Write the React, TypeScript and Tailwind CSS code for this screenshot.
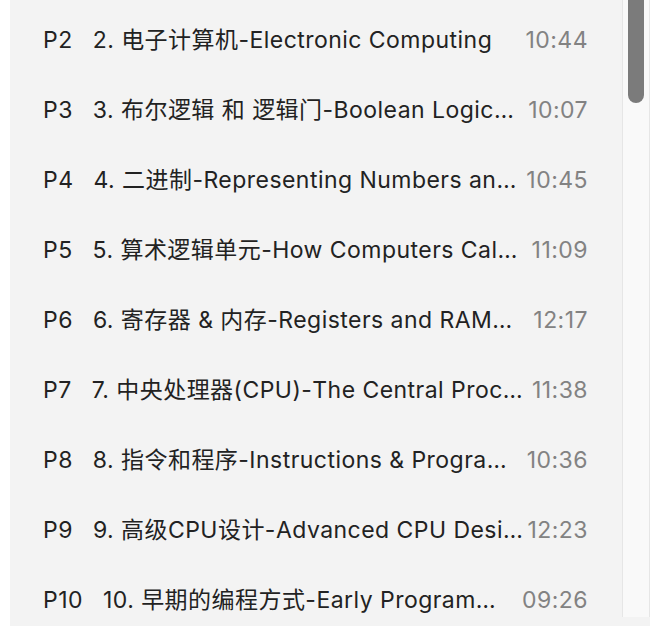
const episodes = [
  { page: "P2", title: "2. 电子计算机-Electronic Computing", duration: "10:44" },
  { page: "P3", title: "3. 布尔逻辑 和 逻辑门-Boolean Logic…", duration: "10:07" },
  { page: "P4", title: "4. 二进制-Representing Numbers an…", duration: "10:45" },
  { page: "P5", title: "5. 算术逻辑单元-How Computers Cal…", duration: "11:09" },
  { page: "P6", title: "6. 寄存器 & 内存-Registers and RAM…", duration: "12:17" },
  { page: "P7", title: "7. 中央处理器(CPU)-The Central Proc…", duration: "11:38" },
  { page: "P8", title: "8. 指令和程序-Instructions & Progra…", duration: "10:36" },
  { page: "P9", title: "9. 高级CPU设计-Advanced CPU Desi…", duration: "12:23" },
  { page: "P10", title: "10. 早期的编程方式-Early Program…", duration: "09:26" },
];

export default function App() {
  return (
    <div className="h-[630px] w-[670px] overflow-hidden bg-white pl-[10px] font-['Inter','Noto_Sans_CJK_SC',sans-serif]">
      <div className="flex h-[626px] w-[640px] items-start bg-[#f3f3f3]">
        <ul className="h-[626px] flex-1 overflow-hidden pt-[5px] pl-[33px] pr-[34px]">
          {episodes.map((ep) => (
            <li
              key={ep.page}
              className="flex h-[70px] items-center text-[23px] tracking-[0.02em] text-[#222222]"
            >
              <span className="mr-[20px] shrink-0">{ep.page}</span>
              <span className="min-w-0 flex-1 truncate">{ep.title}</span>
              <span className="ml-[2px] shrink-0 text-[#828282]">{ep.duration}</span>
            </li>
          ))}
        </ul>
        <div className="relative h-[617px] w-[28px] shrink-0 border-x border-[#e6e6e6] bg-[#f9f9f9]">
          <div className="absolute left-[5px] top-0 h-[103px] w-[16px] rounded-b-full bg-[#7b7b7b]" />
        </div>
      </div>
    </div>
  );
}
